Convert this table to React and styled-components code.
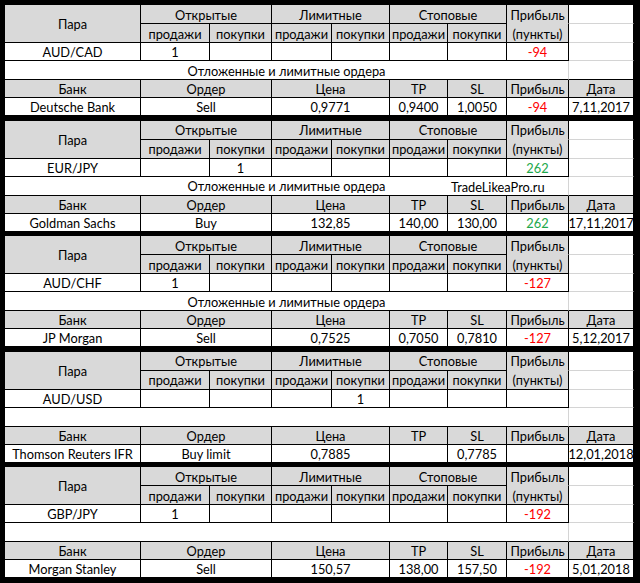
import styled, { createGlobalStyle } from "styled-components";

const GlobalStyle = createGlobalStyle`
  html, body {
    margin: 0;
    background: #000;
  }
  body {
    font-family: Lato, "Liberation Sans", sans-serif;
    font-size: 12.8px;
    color: #000;
  }
`;

const Sheet = styled.div`
  width: 640px;
  height: 583px;
  box-sizing: border-box;
  padding: 5px 6px 5px 5px;
  display: flex;
  flex-direction: column;
  gap: 4.5px;
  overflow: hidden;
`;

const Block = styled.div`
  display: grid;
  grid-template-columns: 136px 69px 62px 60px 58px 58px 59px 62px 65px;
  grid-template-rows: 19px 19px 18px 19px 18px 18px;
  background: #fff;
`;

const toneColor = {
  loss: "#ff0000",
  gain: "#1ea84b",
};

const Cell = styled.div`
  box-sizing: border-box;
  display: flex;
  align-items: center;
  justify-content: center;
  padding-top: 1px;
  white-space: nowrap;
  overflow: hidden;
  grid-column: span ${(p) => p.$span || 1};
  grid-row: span ${(p) => p.$rows || 1};
  background: ${(p) => (p.$head ? "#d9d9d9" : "#fff")};
  color: ${(p) => toneColor[p.$tone] || "#000"};
  border-right: 1px solid ${(p) => (p.$rightLight ? "#d4d4d4" : "#000")};
  border-bottom: 1px solid
    ${(p) =>
      p.$bb === "none" ? "transparent" : p.$bb === "light" ? "#d4d4d4" : "#000"};
`;

const Pending = styled(Cell)`
  grid-column: 1 / span 8;
  grid-row: 4;
`;

const Watermark = styled.div`
  grid-column: 7 / span 2;
  grid-row: 4;
  z-index: 1;
  display: flex;
  align-items: center;
  padding: 1px 0 0 3px;
  white-space: nowrap;
`;

const blocks = [
  {
    pair: "AUD/CAD",
    orders: ["1", "", "", "", "", ""],
    profit: -94,
    note: true,
    bank: "Deutsche Bank",
    order: "Sell",
    price: "0,9771",
    tp: "0,9400",
    sl: "1,0050",
    date: "7,11,2017",
  },
  {
    pair: "EUR/JPY",
    orders: ["", "1", "", "", "", ""],
    profit: 262,
    note: true,
    site: "TradeLikeaPro.ru",
    bank: "Goldman Sachs",
    order: "Buy",
    price: "132,85",
    tp: "140,00",
    sl: "130,00",
    date: "17,11,2017",
  },
  {
    pair: "AUD/CHF",
    orders: ["1", "", "", "", "", ""],
    profit: -127,
    note: true,
    bank: "JP Morgan",
    order: "Sell",
    price: "0,7525",
    tp: "0,7050",
    sl: "0,7810",
    date: "5,12,2017",
  },
  {
    pair: "AUD/USD",
    orders: ["", "", "", "1", "", ""],
    profit: null,
    note: false,
    bank: "Thomson Reuters IFR",
    order: "Buy limit",
    price: "0,7885",
    tp: "",
    sl: "0,7785",
    date: "12,01,2018",
  },
  {
    pair: "GBP/JPY",
    orders: ["1", "", "", "", "", ""],
    profit: -192,
    note: false,
    bank: "Morgan Stanley",
    order: "Sell",
    price: "150,57",
    tp: "138,00",
    sl: "157,50",
    date: "5,01,2018",
  },
];

const toneOf = (v) => (v == null ? undefined : v < 0 ? "loss" : "gain");

function PairBlock({ b }) {
  const tone = toneOf(b.profit);
  return (
    <Block>
      <Cell $head $rows={2}>Пара</Cell>
      <Cell $head $span={2}>Открытые</Cell>
      <Cell $head $span={2}>Лимитные</Cell>
      <Cell $head $span={2}>Стоповые</Cell>
      <Cell $head $bb="none">Прибыль</Cell>
      <Cell $bb="light" />

      {["продажи", "покупки", "продажи", "покупки", "продажи", "покупки"].map(
        (t, i) => (
          <Cell $head key={i}>
            {t}
          </Cell>
        )
      )}
      <Cell $head>(пункты)</Cell>
      <Cell $bb="light" />

      <Cell>{b.pair}</Cell>
      {b.orders.map((v, i) => (
        <Cell key={i}>{v}</Cell>
      ))}
      <Cell $tone={tone}>{b.profit}</Cell>
      <Cell $bb="light" />

      <Pending $rightLight>{b.note ? "Отложенные и лимитные ордера" : ""}</Pending>
      {b.site && <Watermark>{b.site}</Watermark>}
      <Cell />

      <Cell $head>Банк</Cell>
      <Cell $head $span={2}>Ордер</Cell>
      <Cell $head $span={2}>Цена</Cell>
      <Cell $head>TP</Cell>
      <Cell $head>SL</Cell>
      <Cell $head>Прибыль</Cell>
      <Cell $head>Дата</Cell>

      <Cell>{b.bank}</Cell>
      <Cell $span={2}>{b.order}</Cell>
      <Cell $span={2}>{b.price}</Cell>
      <Cell>{b.tp}</Cell>
      <Cell>{b.sl}</Cell>
      <Cell $tone={tone}>{b.profit}</Cell>
      <Cell>{b.date}</Cell>
    </Block>
  );
}

export default function App() {
  return (
    <>
      <GlobalStyle />
      <Sheet>
        {blocks.map((b) => (
          <PairBlock key={b.pair} b={b} />
        ))}
      </Sheet>
    </>
  );
}
